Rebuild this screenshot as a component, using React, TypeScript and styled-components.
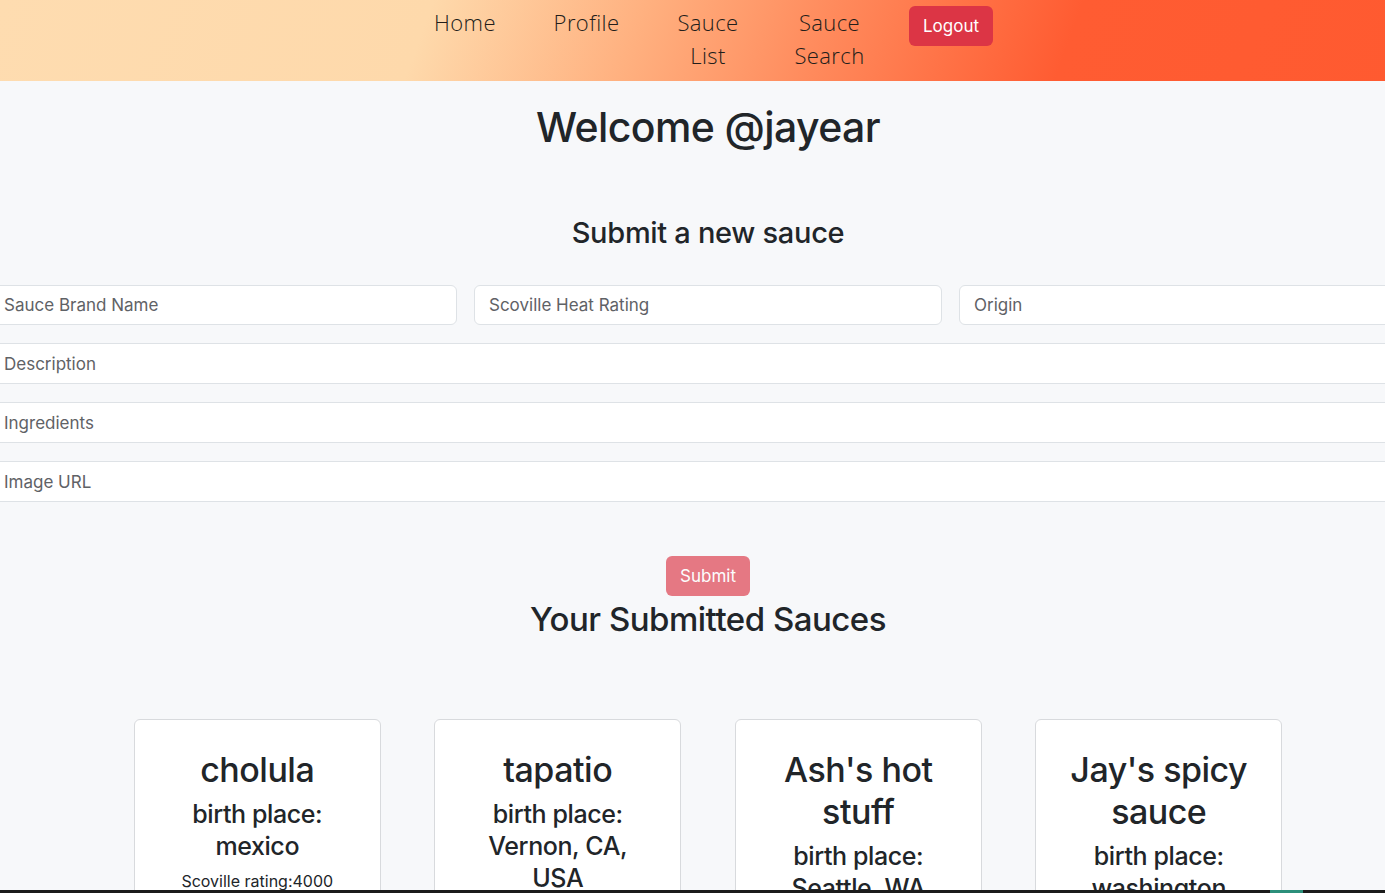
import React from "react";
import styled, { createGlobalStyle } from "styled-components";

const GlobalStyle = createGlobalStyle`
  html, body {
    margin: 0;
    padding: 0;
    overflow-x: hidden;
    background: #f7f8fa;
  }
  body {
    font-family: Inter, "Noto Sans", sans-serif;
    color: #212529;
  }
  * {
    box-sizing: border-box;
  }
`;

const sauces = [
  { name: "cholula", origin: "mexico", rating: "4000" },
  { name: "tapatio", origin: "Vernon, CA, USA", rating: "3000" },
  { name: "Ash's hot stuff", origin: "Seattle, WA", rating: "9000" },
  { name: "Jay's spicy sauce", origin: "washington", rating: "12000" },
];

const App = () => {
  return (
    <>
      <GlobalStyle />
      <Page>
        <NavBar>
          <NavItem>Home</NavItem>
          <NavItem>Profile</NavItem>
          <NavItem>Sauce List</NavItem>
          <NavItem>Sauce Search</NavItem>
          <NavSlot>
            <Button>Logout</Button>
          </NavSlot>
        </NavBar>

        <Title>Welcome @jayear</Title>

        <SubTitle>Submit a new sauce</SubTitle>
        <Form>
          <InputRow>
            <Input placeholder="Sauce Brand Name" rounded />
            <Input placeholder="Scoville Heat Rating" rounded />
            <Input placeholder="Origin" rounded />
          </InputRow>
          <Input placeholder="Description" />
          <Input placeholder="Ingredients" />
          <Input placeholder="Image URL" />
        </Form>

        <SubmitWrap>
          <Button disabled>Submit</Button>
        </SubmitWrap>
        <SectionTitle>Your Submitted Sauces</SectionTitle>

        <CardGrid>
          {sauces.map((s) => (
            <Card key={s.name}>
              <CardTitle>{s.name}</CardTitle>
              <CardOrigin>birth place: {s.origin}</CardOrigin>
              <CardText>Scoville rating:{s.rating}</CardText>
            </Card>
          ))}
        </CardGrid>
      </Page>
      <Dock>
        <DockMark />
      </Dock>
    </>
  );
};

export default App;

// =================================================================

const Page = styled.div`
  width: 1416px;
  padding-bottom: 60px;
`;

const NavBar = styled.nav`
  display: flex;
  justify-content: center;
  height: 81px;
  padding-top: 6px;
  background: linear-gradient(110deg, #fedcb0 0%, #fed9ab 30%, #ffb07f 45%, #ff8a5c 58%, #ff5c32 75%, #ff5a30 100%);
`;

const NavItem = styled.div`
  width: 121.5px;
  padding: 0 12px;
  text-align: center;
  font-family: "Open Sans", sans-serif;
  font-weight: 300;
  font-size: 22px;
  line-height: 33px;
  letter-spacing: 0.4px;
  color: #221d1a;
`;

const NavSlot = styled.div`
  width: 121.5px;
  display: flex;
  justify-content: center;
  align-items: flex-start;
`;

const Button = styled.button`
  height: 40px;
  padding: 0 14px;
  border: none;
  border-radius: 6px;
  background: #dc3545;
  color: #fff;
  font-family: Inter, "Noto Sans", sans-serif;
  font-size: 17px;

  &:disabled {
    opacity: 0.65;
  }
`;

const Title = styled.h1`
  margin: 21px 0 0;
  text-align: center;
  font-size: 41px;
  font-weight: 500;
  letter-spacing: -0.6px;
  line-height: 50px;
`;

const SubTitle = styled.h2`
  margin: 63px 0 0;
  text-align: center;
  font-size: 29px;
  font-weight: 500;
  letter-spacing: -0.3px;
  line-height: 36px;
`;

const Form = styled.form`
  display: flex;
  flex-direction: column;
  gap: 18px;
  margin: 34px -11px 0;
`;

const InputRow = styled.div`
  display: grid;
  grid-template-columns: repeat(3, 1fr);
  gap: 17px;
`;

const Input = styled.input<{ rounded?: boolean }>`
  height: ${(p) => (p.rounded ? "40px" : "41px")};
  width: 100%;
  padding: 0 14px;
  border: 1px solid #dee2e6;
  border-radius: ${(p) => (p.rounded ? "6px" : "0")};
  background: #fff;
  font-family: Inter, "Noto Sans", sans-serif;
  font-size: 17px;
  color: #212529;

  &::placeholder {
    color: #5f6266;
  }
`;

const SubmitWrap = styled.div`
  display: flex;
  justify-content: center;
  margin-top: 54px;
`;

const SectionTitle = styled.h2`
  margin: 2px 0 0;
  text-align: center;
  font-size: 33px;
  font-weight: 500;
  letter-spacing: -0.5px;
  line-height: 42px;
`;

const CardGrid = styled.div`
  display: flex;
  justify-content: center;
  gap: 53.5px;
  margin-top: 79px;
`;

const Card = styled.div`
  width: 247px;
  height: 260px;
  padding: 29px 28px;
  background: #fff;
  border: 1px solid #d8dadd;
  border-radius: 6px;
  text-align: center;
`;

const CardTitle = styled.h3`
  margin: 0 0 7px;
  font-size: 34px;
  font-weight: 500;
  letter-spacing: -0.5px;
  line-height: 42px;
`;

const CardOrigin = styled.h4`
  margin: 0 0 7px;
  font-size: 25px;
  font-weight: 500;
  letter-spacing: -0.4px;
  line-height: 32px;
`;

const CardText = styled.p`
  margin: 0;
  font-size: 16px;
  line-height: 24px;
`;

const Dock = styled.div`
  position: fixed;
  left: 0;
  right: 0;
  bottom: 0;
  height: 3px;
  background: #1b1b1b;
`;

const DockMark = styled.div`
  margin-left: 1270px;
  width: 33px;
  height: 3px;
  background: #2b8f7a;
`;
